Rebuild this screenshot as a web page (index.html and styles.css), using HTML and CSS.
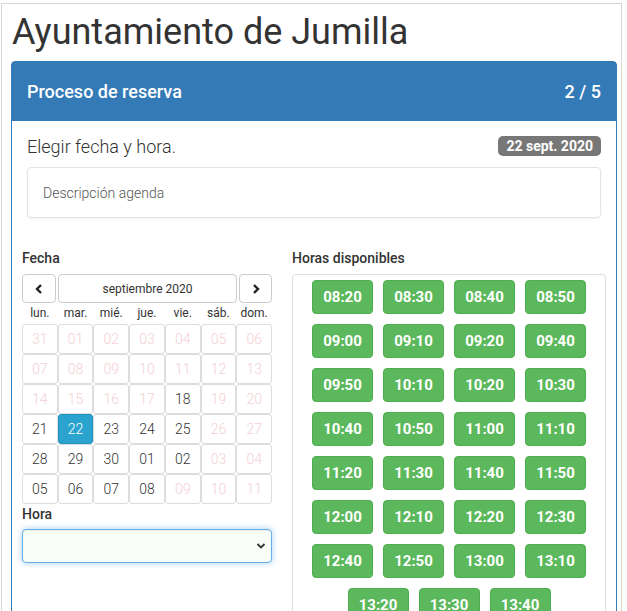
FILE: index.html
```html
<!DOCTYPE html>
<html lang="es">
<head>
<meta charset="utf-8">
<title>Ayuntamiento de Jumilla</title>
<link rel="stylesheet" href="styles.css">
</head>
<body>
<div class="frame">
  <h1 class="title">Ayuntamiento de Jumilla</h1>
  <div class="panel">
    <div class="panel-heading">
      <span>Proceso de reserva</span>
      <span>2 / 5</span>
    </div>
    <div class="panel-body">
      <div class="step-head">
        <span class="step-title">Elegir fecha y hora.</span>
        <span class="badge">22 sept. 2020</span>
      </div>
      <div class="well">Descripción agenda</div>
      <div class="row">
        <div class="col-left">
          <div class="label">Fecha</div>
          <div class="cal-nav">
            <button class="nav-btn"><svg width="12" height="12" viewBox="0 0 12 12"><path d="M8 2 L4 6 L8 10" fill="none" stroke="#222" stroke-width="2.4"/></svg></button>
            <button class="nav-btn month">septiembre 2020</button>
            <button class="nav-btn"><svg width="12" height="12" viewBox="0 0 12 12"><path d="M4 2 L8 6 L4 10" fill="none" stroke="#222" stroke-width="2.4"/></svg></button>
          </div>
          <div class="cal-grid">
            <div class="wd">lun.</div><div class="wd">mar.</div><div class="wd">mié.</div><div class="wd">jue.</div><div class="wd">vie.</div><div class="wd">sáb.</div><div class="wd">dom.</div>
            <div class="day off">31</div><div class="day off">01</div><div class="day off">02</div><div class="day off">03</div><div class="day off">04</div><div class="day off">05</div><div class="day off">06</div>
            <div class="day off">07</div><div class="day off">08</div><div class="day off">09</div><div class="day off">10</div><div class="day off">11</div><div class="day off">12</div><div class="day off">13</div>
            <div class="day off">14</div><div class="day off">15</div><div class="day off">16</div><div class="day off">17</div><div class="day">18</div><div class="day off">19</div><div class="day off">20</div>
            <div class="day">21</div><div class="day active">22</div><div class="day">23</div><div class="day">24</div><div class="day">25</div><div class="day off">26</div><div class="day off">27</div>
            <div class="day">28</div><div class="day">29</div><div class="day">30</div><div class="day">01</div><div class="day">02</div><div class="day off">03</div><div class="day off">04</div>
            <div class="day">05</div><div class="day">06</div><div class="day">07</div><div class="day">08</div><div class="day off">09</div><div class="day off">10</div><div class="day off">11</div>
          </div>
          <div class="label hora">Hora</div>
          <div class="select-wrap">
            <select class="select"><option></option></select>
            <svg class="chev" width="10" height="8" viewBox="0 0 10 8"><path d="M1.5 2 L5 5.5 L8.5 2" fill="none" stroke="#333" stroke-width="1.8"/></svg>
          </div>
        </div>
        <div class="col-right">
          <div class="label">Horas disponibles</div>
          <div class="hours">
            <button class="hbtn">08:20</button><button class="hbtn">08:30</button><button class="hbtn">08:40</button><button class="hbtn">08:50</button>
            <button class="hbtn">09:00</button><button class="hbtn">09:10</button><button class="hbtn">09:20</button><button class="hbtn">09:40</button>
            <button class="hbtn">09:50</button><button class="hbtn">10:10</button><button class="hbtn">10:20</button><button class="hbtn">10:30</button>
            <button class="hbtn">10:40</button><button class="hbtn">10:50</button><button class="hbtn">11:00</button><button class="hbtn">11:10</button>
            <button class="hbtn">11:20</button><button class="hbtn">11:30</button><button class="hbtn">11:40</button><button class="hbtn">11:50</button>
            <button class="hbtn">12:00</button><button class="hbtn">12:10</button><button class="hbtn">12:20</button><button class="hbtn">12:30</button>
            <button class="hbtn">12:40</button><button class="hbtn">12:50</button><button class="hbtn">13:00</button><button class="hbtn">13:10</button>
            <button class="hbtn">13:20</button><button class="hbtn">13:30</button><button class="hbtn">13:40</button>
          </div>
        </div>
      </div>
    </div>
  </div>
</div>
</body>
</html>
```
FILE: styles.css
```css
html, body {
  margin: 0;
  padding: 0;
  background: #fff;
  font-family: Roboto, "Liberation Sans", sans-serif;
  color: #333;
  overflow: hidden;
}
.frame {
  margin: 3px 5px 0 1px;
  border: 1px solid #d6d6d6;
  border-bottom: none;
  padding: 0 4px 40px 9px;
  height: 700px;
}
.title {
  margin: 8px 0 9px 1px;
  font-size: 36px;
  line-height: 40px;
  font-weight: 400;
  color: #333;
}
.panel {
  border: 1px solid #337ab7;
  border-radius: 4px 4px 0 0;
  height: 620px;
}
.panel-heading {
  background: #337ab7;
  color: #fff;
  height: 59px;
  display: flex;
  align-items: center;
  justify-content: space-between;
  padding: 0 15px;
  font-size: 18px;
  font-weight: 500;
}
.panel-body {
  padding: 15px 15px;
}
.step-head {
  display: flex;
  justify-content: space-between;
  align-items: center;
  height: 20px;
}
.step-title {
  font-size: 18px;
  font-weight: 300;
  color: #333;
}
.badge {
  background: #777;
  color: #fff;
  font-size: 14px;
  font-weight: 700;
  line-height: 20px;
  height: 20px;
  padding: 0 8px;
  border-radius: 5px;
}
.well {
  margin-top: 11px;
  height: 49px;
  border: 1px solid #e3e3e3;
  border-radius: 4px;
  box-shadow: 0 1px 2px rgba(0,0,0,.06);
  padding: 0 15px;
  display: flex;
  align-items: center;
  font-size: 14px;
  font-weight: 300;
  color: #555;
}
.row {
  margin: 30px -5px 0;
  display: grid;
  grid-template-columns: 250px 1fr;
  column-gap: 20px;
}
.label {
  font-size: 14px;
  font-weight: 500;
  line-height: 20px;
  margin-bottom: 6px;
  color: #333;
}
.label.hora {
  margin-bottom: 5px;
}
.cal-nav {
  display: grid;
  grid-template-columns: 34px 1fr 33px;
  column-gap: 2px;
  height: 29px;
}
.nav-btn {
  border: 1px solid #ccc;
  border-radius: 4px;
  background: #fff;
  padding: 0;
  font-family: Roboto, "Liberation Sans", sans-serif;
  font-size: 12px;
  color: #333;
  display: flex;
  align-items: center;
  justify-content: center;
}
.cal-grid {
  display: grid;
  grid-template-columns: repeat(7, 1fr);
  grid-template-rows: 21px;
  grid-auto-rows: 30px;
}
.wd {
  height: 21px;
  line-height: 21px;
  text-align: center;
  font-size: 12px;
  color: #333;
}
.day {
  border: 1px solid #ddd;
  border-radius: 3px;
  display: flex;
  align-items: center;
  justify-content: center;
  font-size: 14px;
  font-weight: 300;
  color: #333;
  background: #fff;
}
.day.off {
  color: #f4d0d4;
}
.day.active {
  background: #2ba3cf;
  border-color: #2393bd;
  color: #fff;
}
.select-wrap {
  position: relative;
  height: 34px;
}
.select {
  appearance: none;
  -webkit-appearance: none;
  width: 100%;
  height: 34px;
  box-sizing: border-box;
  border: 1px solid #66afe9;
  border-radius: 4px;
  background: #f8fdf8;
  box-shadow: inset 0 1px 1px rgba(0,0,0,.075), 0 0 6px rgba(102,175,233,.6);
  outline: none;
}
.chev {
  position: absolute;
  right: 6px;
  top: 13px;
}
.hours {
  border: 1px solid #ddd;
  border-radius: 4px;
  padding: 0 0 20px;
  height: 400px;
  display: flex;
  flex-wrap: wrap;
  justify-content: center;
  align-content: flex-start;
}
.hbtn {
  margin: 5px;
  width: 61px;
  height: 34px;
  border: 1px solid #4cae4c;
  border-radius: 4px;
  background: #5cb85c;
  color: #fff;
  font-family: Roboto, "Liberation Sans", sans-serif;
  font-size: 15px;
  font-weight: 700;
  padding: 0;
}
```
